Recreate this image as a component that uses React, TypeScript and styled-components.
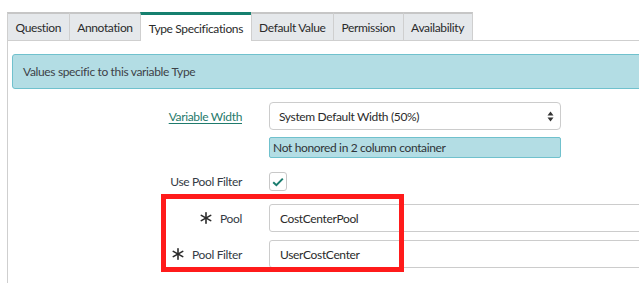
import styled, { createGlobalStyle } from "styled-components";

const GlobalStyle = createGlobalStyle`
  html, body {
    margin: 0;
    padding: 0;
    background: #fff;
    overflow: hidden;
  }
  body {
    font-family: "Lato", "Open Sans", sans-serif;
    font-size: 12px;
    letter-spacing: -0.35px;
    color: #343a44;
  }
`;

const tabs = [
  "Question",
  "Annotation",
  "Type Specifications",
  "Default Value",
  "Permission",
  "Availability",
];

const Asterisk = () => (
  <svg width="12" height="12" viewBox="0 0 12 12">
    <g stroke="#2b2b2b" strokeWidth="1.6" strokeLinecap="round">
      <line x1="6" y1="0.8" x2="6" y2="11.2" />
      <line x1="1.3" y1="3.4" x2="10.7" y2="8.6" />
      <line x1="1.3" y1="8.6" x2="10.7" y2="3.4" />
    </g>
  </svg>
);

const App = () => (
  <>
    <GlobalStyle />
    <Page>
      <TabBar>
        {tabs.map((t) => (
          <Tab key={t} $active={t === "Type Specifications"}>
            {t}
          </Tab>
        ))}
      </TabBar>
      <Panel>
        <Banner>Values specific to this variable Type</Banner>
        <Form>
          <FormRow $top={13}>
            <Label $h={28}>
              <LinkLabel>Variable Width</LinkLabel>
            </Label>
            <Control>
              <SelectBox>
                <span>System Default Width (50%)</span>
                <svg width="7" height="11" viewBox="0 0 7 11">
                  <path d="M3.5 0.5 L6.5 4.5 H0.5 Z" fill="#333" />
                  <path d="M3.5 10.5 L6.5 6.5 H0.5 Z" fill="#333" />
                </svg>
              </SelectBox>
              <Hint>Not honored in 2 column container</Hint>
            </Control>
          </FormRow>

          <FormRow $top={14}>
            <Label $h={19}>Use Pool Filter</Label>
            <Control>
              <CheckBox>
                <svg width="12" height="10" viewBox="0 0 12 10">
                  <path
                    d="M1.2 5.2 L4.4 8.2 L10.8 1.6"
                    fill="none"
                    stroke="#1b7d6f"
                    strokeWidth="2"
                  />
                </svg>
              </CheckBox>
            </Control>
          </FormRow>

          <FormRow $top={13}>
            <Label $h={28}>
              <Asterisk />
              <span>Pool</span>
            </Label>
            <Control>
              <TextInput>CostCenterPool</TextInput>
            </Control>
          </FormRow>

          <FormRow $top={8}>
            <Label $h={28}>
              <Asterisk />
              <span>Pool Filter</span>
            </Label>
            <Control>
              <TextInput>UserCostCenter</TextInput>
            </Control>
          </FormRow>
        </Form>
        <Highlight />
      </Panel>
    </Page>
  </>
);

const Page = styled.div`
  width: 900px;
  padding: 12px 0 0 7px;
`;

const TabBar = styled.div`
  display: flex;
  align-items: flex-end;
  border-bottom: 1px solid #cfcfcf;
`;

const Tab = styled.div<{ $active?: boolean }>`
  box-sizing: border-box;
  height: ${(p) => (p.$active ? "29px" : "28px")};
  margin-bottom: ${(p) => (p.$active ? "-1px" : "0")};
  padding: 1px 7.5px 0;
  display: flex;
  align-items: center;
  color: #2b2b2b;
  background: ${(p) => (p.$active ? "#fff" : "#e5e8eb")};
  border-top: ${(p) => (p.$active ? "3px solid #16806f" : "2px solid #c6c6c6")};
  border-left: 1px solid #cfcfcf;
  &:last-child {
    border-right: 1px solid #cfcfcf;
  }
`;

const Panel = styled.div`
  position: relative;
  border-left: 1px solid #cfcfcf;
  padding: 13px 0 20px 4px;
`;

const Banner = styled.div`
  height: 35px;
  box-sizing: border-box;
  display: flex;
  align-items: center;
  padding-left: 10px;
  background: #b3dde4;
  border: 1px solid #70c1cd;
  border-radius: 3px 0 0 3px;
  color: #3d4248;
`;

const Form = styled.div`
  display: flex;
  flex-direction: column;
`;

const FormRow = styled.div<{ $top: number }>`
  display: grid;
  grid-template-columns: 230px 1fr;
  column-gap: 27px;
  align-items: start;
  margin-top: ${(p) => p.$top}px;
`;

const Label = styled.div<{ $h: number }>`
  height: ${(p) => p.$h}px;
  display: flex;
  align-items: center;
  justify-content: flex-end;
  gap: 8px;
  color: #343a44;
`;

const Control = styled.div`
  display: flex;
  flex-direction: column;
  gap: 7px;
`;

const LinkLabel = styled.span`
  color: #1f7a6c;
  text-decoration: underline;
  text-underline-offset: 2px;
`;

const SelectBox = styled.div`
  width: 292px;
  height: 28px;
  box-sizing: border-box;
  border: 1px solid #cccccc;
  border-radius: 4px;
  display: flex;
  align-items: center;
  justify-content: space-between;
  padding: 0 6px 0 9px;
  color: #2b2b2b;
`;

const Hint = styled.div`
  width: 292px;
  height: 21px;
  box-sizing: border-box;
  background: #b3dde4;
  border: 1px solid #70c1cd;
  border-radius: 2px;
  display: flex;
  align-items: center;
  padding-left: 3px;
  color: #2f3438;
`;

const CheckBox = styled.div`
  width: 18px;
  height: 19px;
  box-sizing: border-box;
  border: 1px solid #c8c8c8;
  border-radius: 3px;
  display: flex;
  align-items: center;
  justify-content: center;
`;

const TextInput = styled.div`
  width: 420px;
  height: 28px;
  box-sizing: border-box;
  border: 1px solid #cccccc;
  border-radius: 3px 0 0 3px;
  display: flex;
  align-items: center;
  padding-left: 10px;
  color: #2b2b2b;
`;

const Highlight = styled.div`
  position: absolute;
  left: 153px;
  top: 153px;
  width: 243px;
  height: 78px;
  box-sizing: border-box;
  border: 5px solid #ff1b1b;
  pointer-events: none;
`;

export default App;
